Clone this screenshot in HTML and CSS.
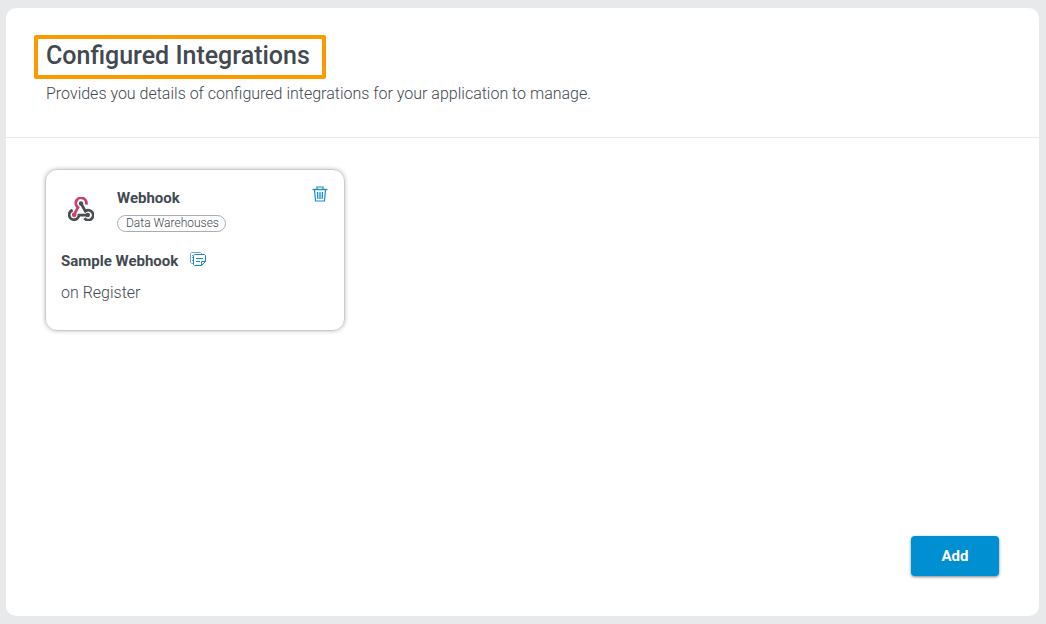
FILE: index.html
```html
<!DOCTYPE html>
<html lang="en">
<head>
<meta charset="utf-8">
<meta name="viewport" content="width=device-width, initial-scale=1">
<title>Configured Integrations</title>
<link rel="stylesheet" href="styles.css">
</head>
<body>
<main class="panel">
  <header class="panel-header">
    <h1 class="title">Configured Integrations</h1>
    <p class="subtitle">Provides you details of configured integrations for your application to manage.</p>
  </header>
  <section class="content">
    <article class="card">
      <div class="card-top">
        <svg class="logo" viewBox="0 0 26 24" fill="none" stroke-width="2.8" aria-hidden="true">
          <path d="M18.2 7.6A5.3 5.3 0 1 0 10 10.4L6.4 17.2" stroke="#cf3f6c"/>
          <path d="M13 6.5L17.4 14.2A4.9 4.9 0 1 1 16.4 21.2" stroke="#4a4d52"/>
          <path d="M4.6 13.1A4.9 4.9 0 1 0 11 18.2H20" stroke="#4a4d52"/>
          <circle cx="13" cy="6.4" r="1.2" fill="#4a4d52" stroke="#4a4d52" stroke-width="2"/>
          <circle cx="6.2" cy="17.8" r="1.4" fill="#cf3f6c" stroke="#cf3f6c" stroke-width="2"/>
          <circle cx="19.8" cy="18" r="1.2" fill="#4a4d52" stroke="#4a4d52" stroke-width="2"/>
        </svg>
        <div class="card-heading">
          <h2 class="name">Webhook</h2>
          <span class="tag">Data Warehouses</span>
        </div>
        <button class="icon-button" type="button" aria-label="Delete integration">
          <svg class="icon-trash" viewBox="0 0 16 16" fill="none" stroke="#168bd0" aria-hidden="true">
            <path d="M.5 3.5h15" stroke-width="1.4"/>
            <path d="M5 3V1h6v2M2.5 4l1 11h9l1-11" stroke-width="1.2"/>
            <path d="M5.5 6l.4 7M8 6v7M10.5 6l-.4 7" stroke-width="1.3"/>
          </svg>
        </button>
      </div>
      <div class="card-label">
        <h3 class="name">Sample Webhook</h3>
        <button class="icon-button" type="button" aria-label="Copy details">
          <svg class="icon-note" viewBox="0 0 16 14" fill="none" stroke="#168bd0" aria-hidden="true">
            <path d="M3 11.5H1.5l-1-1v-9l1-1h9l1 1v1" stroke="#6da6dc"/>
            <path d="M2 3.5h1M2 5.5h1M2 8.5h1" stroke="#6da6dc"/>
            <path d="M4.5 2.5h10l1 1v6l-4 4h-7l-1-1v-9zM11.5 13.5v-4h4"/>
            <path d="M6 6.5h7M6 9.5h4"/>
          </svg>
        </button>
      </div>
      <p class="event">on Register</p>
    </article>
  </section>
  <footer class="actions">
    <button class="add-button" type="button">Add</button>
  </footer>
</main>
</body>
</html>
```
FILE: styles.css
```css
* {
  box-sizing: border-box;
}

body {
  margin: 0;
  min-height: 100vh;
  display: flex;
  padding: 8px 7px 8px 6px;
  background: #e8e9eb;
  color: #424950;
  font: 16px/24px Roboto, "Liberation Sans", sans-serif;
}

h1, h2, h3, p {
  margin: 0;
}

.panel {
  flex: 1;
  display: flex;
  flex-direction: column;
  background: #fff;
  border-radius: 10px;
}

.panel-header {
  padding: 27px 28px 31px;
  border-bottom: 1px solid #e8e9eb;
}

.title {
  width: fit-content;
  padding: 1px 12px 3px 8px;
  border: 4px solid #ff9900;
  border-radius: 2px;
  font-size: 25px;
  line-height: 32px;
  font-weight: 500;
}

.subtitle {
  padding: 3px 12px 0;
  font-weight: 300;
}

.content {
  flex: 1;
  padding: 31px 39px;
}

.card {
  width: 300px;
  min-height: 162px;
  padding: 16px 15px;
  border: 1px solid #c8cacc;
  border-radius: 12px;
  box-shadow: 0 0 4px rgba(0, 0, 0, 0.25);
}

.card-top {
  display: flex;
  align-items: flex-start;
}

.logo {
  width: 26px;
  height: 24px;
  margin: 11px 23px 0 7px;
}

.card-heading {
  flex: 1;
}

.name {
  font-size: 15px;
  line-height: 24px;
  font-weight: 700;
}

.tag {
  display: block;
  width: fit-content;
  margin-top: 5px;
  padding: 0 6px 0 8px;
  border: 1px solid #aaacae;
  border-radius: 9px;
  font-size: 12px;
  line-height: 15px;
  font-weight: 300;
}

.icon-button {
  display: flex;
  padding: 0;
  border: 0;
  background: none;
  cursor: pointer;
}

.icon-trash {
  width: 16px;
  height: 16px;
  margin-right: 1px;
}

.icon-note {
  width: 16px;
  height: 14px;
  margin-bottom: 4px;
}

.card-label {
  display: flex;
  align-items: center;
  gap: 12px;
  margin-top: 17px;
}

.event {
  margin-top: 8px;
  font-weight: 300;
}

.actions {
  display: flex;
  justify-content: flex-end;
  padding: 0 40px 40px;
}

.add-button {
  width: 88px;
  height: 40px;
  border: 0;
  border-radius: 4px;
  background: #008fd0;
  box-shadow: 0 1px 3px rgba(0, 0, 0, 0.5);
  color: #fff;
  font: 700 15px/24px Roboto, "Liberation Sans", sans-serif;
  cursor: pointer;
}
```
